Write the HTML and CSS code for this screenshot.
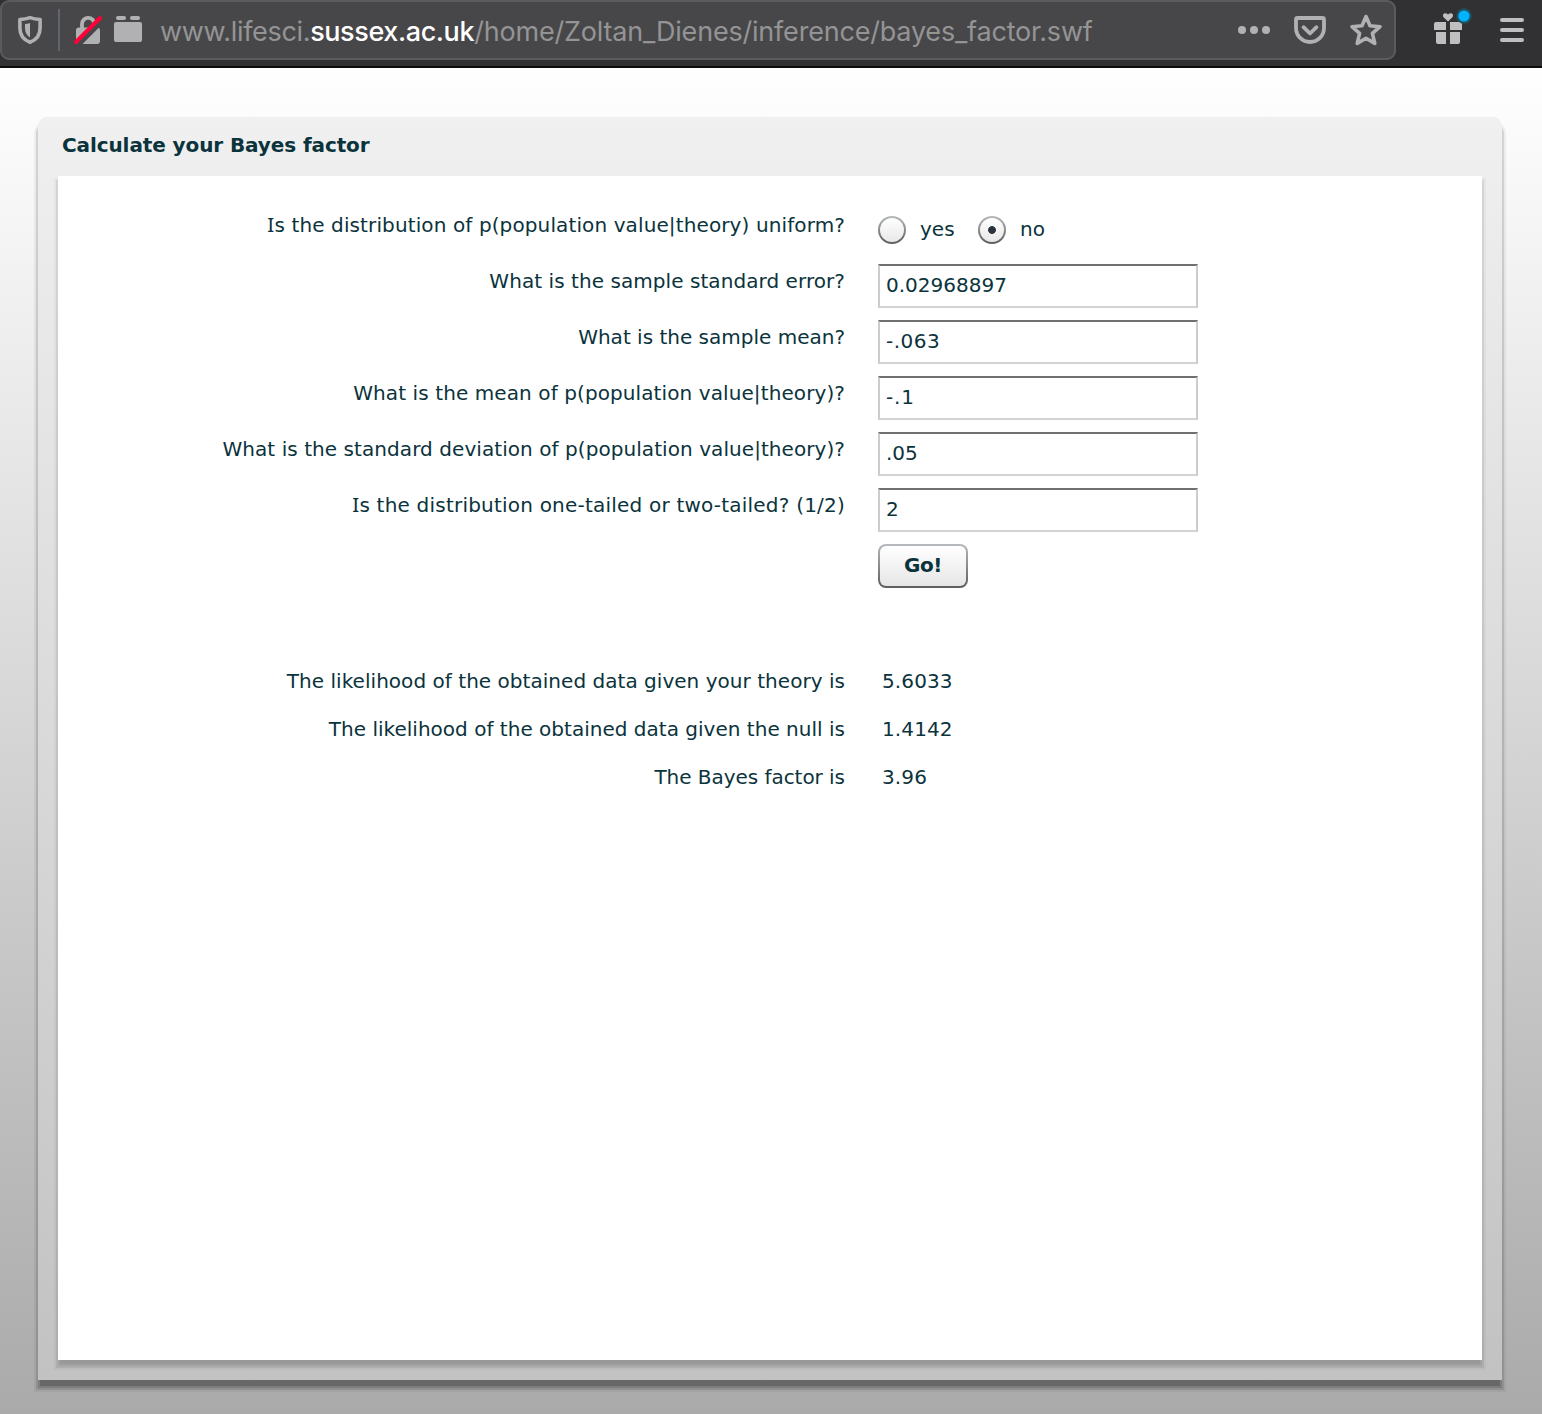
FILE: index.html
```html
<!DOCTYPE html>
<html lang="en">
<head>
<meta charset="utf-8">
<title>Calculate your Bayes factor</title>
<link rel="stylesheet" href="styles.css">
</head>
<body>
<header class="toolbar">
  <div class="address">
    <svg class="ic-shield" width="24" height="28" viewBox="0 0 24 28"><path d="M12 1.6C9 2.7 5.5 3.300 1.900 3.500V12c0 7 4 12 10.100 14.200C18 24 22.100 19 22.100 12V3.500C18.500 3.300 15 2.700 12 1.600z" fill="none" stroke="#b1b1b3" stroke-width="3.600" stroke-linejoin="round"/><path d="M12 6.900c-1.500.6-3.200.9-5 1.100V12c0 4.500 1.800 7.500 5 9.500z" fill="#b1b1b3"/></svg>
    <span class="divider"></span>
    <svg class="ic-lock" width="28" height="30" viewBox="0 0 28 30"><path d="M8 14V9a6.200 6.200 0 0 1 12.400 0v5" fill="none" stroke="#b1b1b3" stroke-width="3.800"/><rect x="2" y="12.500" width="24" height="16.500" rx="3" fill="#b1b1b3"/><path d="M4.500 29.500L28.500 5.500" stroke="#474749" stroke-width="5"/><path d="M2 27L26 3" stroke="#ff0039" stroke-width="4" stroke-linecap="round"/></svg>
    <svg class="ic-block" width="28" height="27" viewBox="0 0 28 27"><rect x="2" y="0" width="10" height="4" rx="2" fill="#b1b1b3"/><rect x="16" y="0" width="10" height="4" rx="2" fill="#b1b1b3"/><rect x="0" y="6" width="28" height="20" rx="2" fill="#b1b1b3"/></svg>
    <div class="url"><span class="u1">www.lifesci.</span><span class="host">sussex.ac.uk</span><span class="u3">/home/Zoltan_Dienes/inference/bayes_factor.swf</span></div>
    <svg class="ic-dots" width="32" height="8" viewBox="0 0 32 8" fill="#b1b1b3"><circle cx="4" cy="4" r="4"/><circle cx="16" cy="4" r="4"/><circle cx="28" cy="4" r="4"/></svg>
    <svg class="ic-pocket" width="32" height="28" viewBox="0 0 32 28" fill="none" stroke="#b1b1b3" stroke-linejoin="round" stroke-linecap="round"><path d="M3.500 2h25A1.500 1.500 0 0 1 30 3.500V12a14 14 0 0 1-28 0V3.500A1.500 1.500 0 0 1 3.500 2z" stroke-width="3.800"/><path d="M9.500 11.200L16 17.500l6.500-6.300" stroke-width="3.800"/></svg>
    <svg class="ic-star" width="32" height="32" viewBox="0 0 32 32"><path d="M16 2.500l4 9.300 10 .9-7.600 6.700 2.400 10L16 24.300 7.200 29.400l2.400-10L2 12.700l10-.9z" fill="none" stroke="#b1b1b3" stroke-width="3.600" stroke-linejoin="round"/></svg>
  </div>
  <svg class="ic-gift" width="40" height="40" viewBox="0 0 40 40"><path d="M15 13.500L10.800 9.500C8.400 7 11.500 3.500 15 6.500 18.500 3.500 21.600 7 19.200 9.500z" fill="#bfbfc0"/><path d="M3 14h10v8H1v-6a2 2 0 0 1 2-2zM17 14h10a2 2 0 0 1 2 2v6H17zM3 24h10v12H5a2 2 0 0 1-2-2zM17 24h10v10a2 2 0 0 1-2 2h-8z" fill="#bfbfc0"/><circle cx="31" cy="8" r="7.800" fill="#22505f"/><circle cx="31" cy="8" r="5.600" fill="#00b3ff"/></svg>
  <svg class="ic-menu" width="24" height="26" viewBox="0 0 24 26" fill="#bfbfc0"><rect y="1" width="24" height="4" rx="2"/><rect y="11" width="24" height="4" rx="2"/><rect y="21" width="24" height="4" rx="2"/></svg>
</header>
<main class="stage">
  <section class="panel">
    <h1><span class="title">Calculate your Bayes factor</span></h1>
    <form class="content">
      <div class="row radios"><div class="label"><span class="q1"><span class="cap">I</span>s the distribution of p(population value|theory) uniform?</span></div>
        <label class="yes"><input type="radio" name="uniform"><span>yes</span></label><label><input type="radio" name="uniform" checked><span>no</span></label></div>
      <div class="row"><div class="label"><span class="q2">What is the sample standard error?</span></div><input class="field" type="text" value="0.02968897"></div>
      <div class="row"><div class="label"><span class="q3">What is the sample mean?</span></div><input class="field mean" type="text" value="-.063"></div>
      <div class="row"><div class="label"><span class="q4">What is the mean of p(population value|theory)?</span></div><input class="field prior" type="text" value="-.1"></div>
      <div class="row"><div class="label"><span class="q5">What is the standard deviation of p(population value|theory)?</span></div><input class="field" type="text" value=".05"></div>
      <div class="row"><div class="label"><span class="q6"><span class="cap">I</span>s the distribution one-tailed or two-tailed? (1/2)</span></div><input class="field" type="text" value="2"></div>
      <div class="row"><div class="label"></div><button type="button"><span>Go!</span></button></div>
      <div class="results">
        <div class="result"><div class="label"><span class="q7">The likelihood of the obtained data given your theory is</span></div><output>5.6033</output></div>
        <div class="result"><div class="label"><span class="q8">The likelihood of the obtained data given the null is</span></div><output>1.4142</output></div>
        <div class="result"><div class="label"><span class="q9">The Bayes factor is</span></div><output>3.96</output></div>
      </div>
    </form>
  </section>
</main>
</body>
</html>
```
FILE: styles.css
```css
* { box-sizing: border-box; }
html, body { height: 100%; margin: 0; }
body { display: flex; flex-direction: column; overflow: hidden; font-family: Verdana, "DejaVu Sans", sans-serif; font-size: 20px; color: #0b333c; }
svg { display: block; flex: none; overflow: visible; }

.toolbar { display: flex; height: 68px; flex: none; background: #313133; border-bottom: 2px solid #0c0c0d; }
.address { display: flex; align-items: flex-start; width: 1396px; height: 60px; padding-left: 16px; background: #474749; border: 2px solid #5b5b5d; border-radius: 9px; }
.ic-shield { margin-top: 14px; }
.divider { width: 2px; height: 42px; margin: 7px 14px 0 16px; background: #5f6670; }
.ic-lock { margin-top: 13px; }
.ic-block { margin: 14px 0 0 12px; }
.url { flex: 1; margin-left: 18px; font: 27px/60px Inter, sans-serif; color: #949495; white-space: nowrap; }
.u1 { letter-spacing: -.33px; }
.host { color: #fff; font-weight: 500; letter-spacing: -.4px; }
.u3 { letter-spacing: -.2px; }
.ic-dots { margin-top: 24px; }
.ic-pocket { margin: 14px 24px 0; }
.ic-star { margin: 12px 12px 0 0; }
.ic-gift { margin: 8px 0 0 37px; }
.ic-menu { margin: 17px 0 0 27px; }

.stage { flex: 1; padding: 49px 40px 34px 38px; background: linear-gradient(#fff, #aaa); }
.panel { height: 1263px; padding: 0 20px 20px; border-radius: 9px 9px 0 0; background: linear-gradient(#f0f0f0, #c2c2c2); box-shadow: 0 8px 0 -2px rgba(0,0,0,.18), 0 8px 0 0 rgba(0,0,0,.13), 0 8px 0 2px rgba(0,0,0,.11), 0 8px 0 4px rgba(0,0,0,.05); }
h1 { height: 59px; margin: 0; padding-left: 4px; font-size: 20px; line-height: 56px; }
.title { letter-spacing: -.1px; }
.content { height: 1184px; padding-top: 32px; background: #fff; box-shadow: 0 6px 0 -2px rgba(0,0,0,.06), 0 6px 0 0 rgba(0,0,0,.06), 0 6px 0 2px rgba(0,0,0,.07), 0 6px 0 4px rgba(0,0,0,.03); }

.row { display: flex; height: 44px; margin-bottom: 12px; }
.label { width: 787px; margin-right: 33px; text-align: right; line-height: 34px; white-space: nowrap; }
.cap { font-family: "Noto Sans", sans-serif; font-size: 20.500px; line-height: 1; }
.q1 { letter-spacing: .115px; }
.q2 { letter-spacing: .06px; }
.q4 { letter-spacing: .095px; }
.q5 { letter-spacing: .065px; }
.q6 { letter-spacing: .21px; }
.q7 { letter-spacing: .035px; }
.q8 { letter-spacing: .015px; }
.q9 { letter-spacing: -.04px; }
.field { width: 320px; height: 44px; padding: 0 6px 3px; color: inherit; font: inherit; background: #fff; border: 2px solid #ccc; border-top-color: #6f7070; border-bottom-color: #d3d3d3; border-radius: 0; outline: none; }
.field.mean { letter-spacing: .5px; }
.field.prior { letter-spacing: .9px; }
.radios label { display: flex; line-height: 42px; gap: 14px; }
.radios .yes { width: 100px; }
.radios input { appearance: none; width: 28px; height: 28px; margin: 8px 0 0; border: 2px solid transparent; border-radius: 50%; background: linear-gradient(#fff, #e8e8e8) padding-box, linear-gradient(#b7babc, #5b5d5e) border-box; }
.radios input:checked { background: radial-gradient(circle, #2b333c 3.500px, transparent 4.300px) padding-box, linear-gradient(#fff, #e8e8e8) padding-box, linear-gradient(#b7babc, #5b5d5e) border-box; }
button { width: 90px; height: 44px; padding: 0 0 2px; font: bold 20px "DejaVu Sans", sans-serif; letter-spacing: -.4px; color: inherit; border: 2px solid transparent; border-radius: 8px; background: linear-gradient(#fff, #e6e6e6) padding-box, linear-gradient(#b7babc, #5b5d5e) border-box; }

.results { padding-top: 64px; }
.result { display: flex; height: 48px; }
.result output { margin-left: 4px; line-height: 34px; letter-spacing: .12px; }
```
